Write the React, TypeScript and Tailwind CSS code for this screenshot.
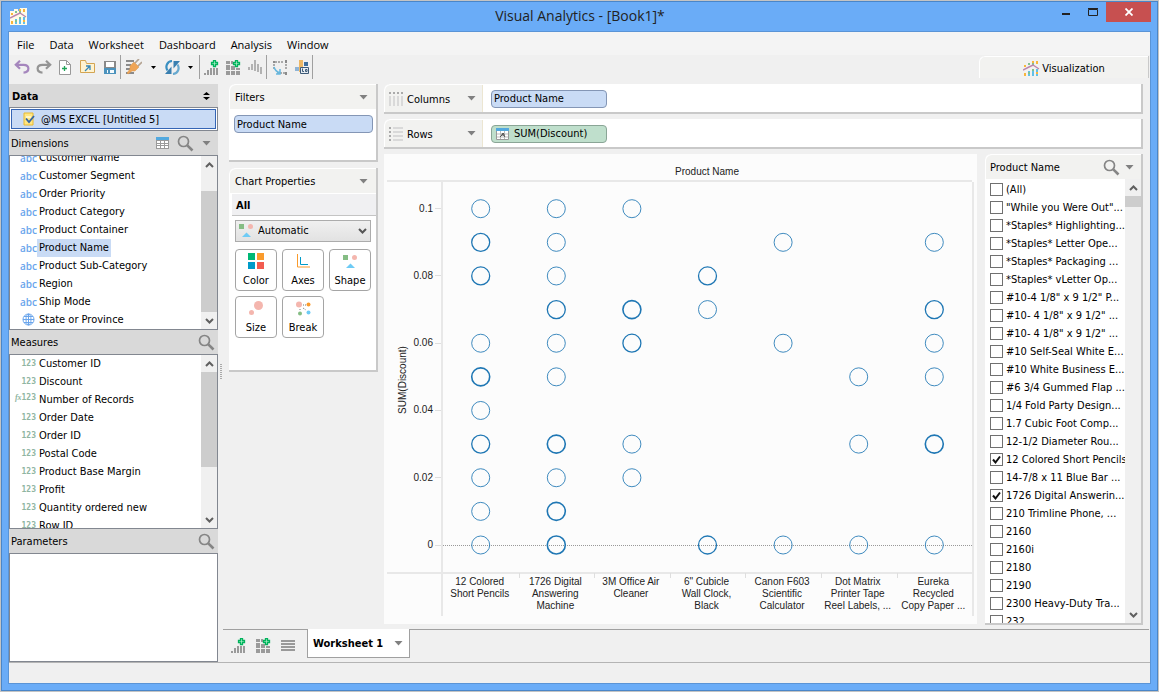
import React from "react";

const dimensions = [
  "Customer Name", "Customer Segment", "Order Priority", "Product Category", "Product Container",
  "Product Name", "Product Sub-Category", "Region", "Ship Mode", "State or Province",
];

const measures = [
  "Customer ID", "Discount", "Number of Records", "Order Date", "Order ID", "Postal Code",
  "Product Base Margin", "Profit", "Quantity ordered new", "Row ID",
];

const productNames = [
  "(All)", "\"While you Were Out\"...", "*Staples* Highlighting...", "*Staples* Letter Ope...", "*Staples* Packaging ...",
  "*Staples* vLetter Op...", "#10-4 1/8\" x 9 1/2\" P...", "#10- 4 1/8\" x 9 1/2\" ...", "#10- 4 1/8\" x 9 1/2\" ...",
  "#10 Self-Seal White E...", "#10 White Business E...", "#6 3/4 Gummed Flap ...", "1/4 Fold Party Design...", "1.7 Cubic Foot Comp...",
  "12-1/2 Diameter Rou...", "12 Colored Short Pencils", "14-7/8 x 11 Blue Bar ...", "1726 Digital Answerin...", "210 Trimline Phone, ...",
  "2160", "2160i", "2180", "2190", "2300 Heavy-Duty Tra...", "232",
];
const checkedIndexes = [15, 17];

// Each entry is [discount in hundredths, stroke weight].
const columns: { label: string[]; points: [number, number][] }[] = [
  { label: ["12 Colored", "Short Pencils"], points: [[10, 1], [9, 2], [8, 2], [6, 1], [5, 3], [4, 1], [3, 2], [2, 1], [1, 1], [0, 1]] },
  { label: ["1726 Digital", "Answering", "Machine"], points: [[10, 1], [9, 1], [8, 1], [7, 2], [6, 1], [5, 1], [3, 3], [2, 1], [1, 3], [0, 3]] },
  { label: ["3M Office Air", "Cleaner"], points: [[10, 1], [7, 3], [6, 2], [3, 1], [2, 1]] },
  { label: ["6\" Cubicle", "Wall Clock,", "Black"], points: [[8, 2], [7, 1], [0, 2]] },
  { label: ["Canon F603", "Scientific", "Calculator"], points: [[9, 1], [6, 1], [0, 1]] },
  { label: ["Dot Matrix", "Printer Tape", "Reel Labels, ..."], points: [[5, 1], [3, 1], [0, 1]] },
  { label: ["Eureka", "Recycled", "Copy Paper ..."], points: [[9, 1], [7, 2], [6, 1], [5, 1], [3, 3], [0, 1]] },
];

const Caret = ({ className = "" }: { className?: string }) => (
  <svg className={className} width="9" height="5" viewBox="0 0 9 5"><path d="M0.5 0h8L4.500 4.500z" fill="#808080" /></svg>
);

const SearchIcon = () => (
  <svg width="17" height="17" viewBox="0 0 17 17" fill="none" stroke="#858585">
    <circle cx="6.500" cy="6.500" r="5" strokeWidth="1.700" />
    <path d="M10.300 10.300L15.500 15.500" strokeWidth="2.600" />
  </svg>
);

const AppLogo = ({ bg = false }: { bg?: boolean }) => (
  <svg width="17" height="17" viewBox="0 0 17 17">
    {bg && <path d="M0 3h4V1h4v2h2V0h7v17H0z" fill="#fffbea" />}
    <path d="M5 11h2v5H5zM9 9h2v7H9zM13 9h2v7h-2z" fill="#62c0e8" />
    <path d="M5 12h2v2H5zM9 9h2v2H9zM5 3h2v2H5zM9 3h2v2H9z" fill="#82c18d" />
    <path d="M1 5h2v2H1zM1 13h2v3H1zM9 1h2v2H9zM13 1h2v3h-2zM13 12h2v2h-2z" fill="#f8b63c" />
    <path d="M0 10L6 7L10 5L16 9" fill="none" stroke="#bd86ad" strokeWidth="1.400" />
  </svg>
);

const AddSheet = ({ grid = false }: { grid?: boolean }) => (
  <svg width="15" height="15" viewBox="0 0 15 15">
    {grid
      ? <path d="M0 1h4v3H0zM5 1h2v3H5zM0 5h4v5H0zM5 6h4v4H5zM10 8h4v2h-4zM0 11h4v4H0zM5 11h4v4H5zM10 11h4v4h-4z" fill="#9a9a9a" />
      : <path d="M0 13h2v2H0zM3 10h2v5H3zM6 8h2v7H6zM9 8h2v7H9zM12 8h2v7h-2z" fill="#9a9a9a" />}
    <path d="M9.500 0.500h2v2h2v2h-2v2h-2v-2h-2v-2h2z" fill="#b7f2d0" stroke="#00b35c" strokeWidth="1.300" />
  </svg>
);

const ShapesIcon = () => (
  <svg width="15" height="13" viewBox="0 0 15 13">
    <path d="M0 0h5v5H0z" fill="#85bd84" /><circle cx="11.500" cy="2.500" r="2.500" fill="#f4b6ae" /><path d="M7.500 8.500L12 13H3z" fill="#6ecbf5" />
  </svg>
);

const toolIcons: Record<string, React.ReactNode> = {
  Undo: <svg width="16" height="14" viewBox="0 0 16 14" fill="none" stroke="#a586bd" strokeWidth="2.200"><path d="M6 .8L1.800 4.800L6 8.800M2 4.800h7.500c6.500 0 6.500 7.500 0 7.800" /></svg>,
  Redo: <svg width="16" height="14" viewBox="0 0 16 14" fill="none" stroke="#949494" strokeWidth="2.200"><path d="M10 .8L14.200 4.800L10 8.800M14 4.800H6.500c-6.500 0-6.500 7.500 0 7.800" /></svg>,
  New: <svg width="12" height="15" viewBox="0 0 12 15"><path d="M.5.5h7l4 4v10H.5z" fill="#fff" stroke="#999" /><path d="M7.500.5v4h4" fill="none" stroke="#999" /><path d="M3 8.500h5M5.500 6v5" stroke="#22a559" strokeWidth="1.300" /></svg>,
  Open: <svg width="15" height="14" viewBox="0 0 15 14"><path d="M.5.5h5l1 3h8v9H.5z" fill="#fff3d0" stroke="#d3a552" /><path d="M5 11L9.500 6.500M6 6h4v4" fill="none" stroke="#3687b8" strokeWidth="1.300" /></svg>,
  Save: <svg width="12" height="13" viewBox="0 0 12 13"><path d="M0 0h12v7H0z" fill="#8a8a8a" /><path d="M2 1h8v5H2z" fill="#fff" /><path d="M0 7h12v6H0z" fill="#4c93bd" /><path d="M3 9h7v3H3z" fill="#f4fafd" /><path d="M4 9h2v3H4z" fill="#4c93bd" /></svg>,
  Connect: <svg width="17" height="16" viewBox="0 0 17 16"><path d="M1 1h8v2H1zM1 5h5v2H1zM1 9h4v2H1zM1 13h8v2H1z" fill="#8b8b8b" /><path d="M5 7l4-4 5 5-4 4H7l-4 3-1-1 3-4z" fill="#efa557" stroke="#d6954d" strokeWidth=".5" /><path d="M10 4l4-4M13 7l4-4" stroke="#b4a392" strokeWidth="1.700" /></svg>,
  Refresh: <svg width="15" height="15" viewBox="0 0 15 15"><path d="M7 1C2 1.500 0 6.500 2.500 10.500" fill="none" stroke="#3a8fc1" strokeWidth="2.200" /><path d="M8 14c5-.5 7-5.500 4.500-9.500" fill="none" stroke="#68a9cf" strokeWidth="2.200" /><path d="M6.500 6.500v7.500H0zM8.500 8.500V1H15z" fill="#397fb0" /></svg>,
  Sort: <svg width="15" height="14" viewBox="0 0 15 14"><path d="M0 7h2v3H0zM3 4h2v6H3zM6 0h2v11H6zM9 4h2v8H9zM12 7h2v7h-2z" fill="#b2b2b2" /></svg>,
  Swap: <svg width="15" height="15" viewBox="0 0 15 15"><path d="M3 2h9M2 4v6M14 4v6M5 13h8" fill="none" stroke="#939393" strokeDasharray="2 1" strokeWidth="1.500" /><path d="M1 1h2v2H1zM13 0h2v3h-2zM13 12h2v3h-2z" fill="#8b8b8b" /><path d="M2 7c1 4 3 5 6 6M8 9v5H4" fill="none" stroke="#67b8df" strokeWidth="1.500" /></svg>,
  Labels: <svg width="14" height="15" viewBox="0 0 14 15"><path d="M4 0h4v12H4z" fill="#edb765" /><path d="M0 7h4v4H0z" fill="#8fb4d6" /><path d="M9 2h4v4H9z" fill="#3d6d9b" /><path d="M5.500 7.500h8v6h-8z" fill="#e7edf2" stroke="#3d5a78" /><path d="M7.500 8.500v3h1.500M10.500 9.500h1.500v2h-1.500z" fill="none" stroke="#3d5a78" /></svg>,
};

const ToolButton = ({ name, width }: { name: string; width: string }) => (
  <button aria-label={name} className={`flex h-6 shrink-0 items-center justify-center ${width}`}>{toolIcons[name]}</button>
);

const Separator = () => <div className="h-6 w-px shrink-0 bg-[#a0a0a0]" />;

const DropArrow = ({ name }: { name: string }) => (
  <button aria-label={`${name} options`} className="flex h-6 w-[17px] shrink-0 items-center justify-center">
    <svg width="5" height="3" viewBox="0 0 5 3"><path d="M0 0h5L2.500 3z" fill="#000" /></svg>
  </button>
);

const Scrollbar = ({ thumb }: { thumb: string }) => (
  <div className="flex w-4 shrink-0 flex-col items-center bg-[#f0f0f0]">
    <button aria-label="Scroll up" className="flex h-[17px] w-full shrink-0 items-center justify-center">
      <svg width="9" height="6" viewBox="0 0 9 6" fill="none" stroke="#606060" strokeWidth="2"><path d="M1 5L4.500 1.500L8 5" /></svg>
    </button>
    <div className="flex min-h-0 w-full flex-1 flex-col"><div className={`w-full bg-[#cdcdcd] ${thumb}`} /></div>
    <button aria-label="Scroll down" className="flex h-[17px] w-full shrink-0 items-center justify-center">
      <svg width="9" height="6" viewBox="0 0 9 6" fill="none" stroke="#606060" strokeWidth="2"><path d="M1 1L4.500 4.500L8 1" /></svg>
    </button>
  </div>
);

const SideHeader = ({ title, children }: { title: string; children?: React.ReactNode }) => (
  <div className="flex h-6 shrink-0 items-center gap-2 bg-[#d9d9d9] pr-[3px] pl-[2px]">
    <h2 className="flex-1 pt-[2px]">{title}</h2>
    {children}
    <button aria-label={`Search ${title}`}><SearchIcon /></button>
  </div>
);

const Globe = () => (
  <svg width="13" height="13" viewBox="0 0 13 13" fill="none" stroke="#6aa5ec"><circle cx="6.500" cy="6.500" r="5.500" /><ellipse cx="6.500" cy="6.500" rx="2.500" ry="5.500" /><path d="M1 6.500h11M2 3.500h9M2 9.500h9M6.500 1v11" /></svg>
);

const PropButton = ({ label, children }: { label: string; children: React.ReactNode }) => (
  <button className="flex h-[42px] flex-col items-center justify-between rounded border border-[#a5a5a5] bg-white pt-[3px] pb-[2px]">
    <span className="flex h-4 items-center">{children}</span>
    <span>{label}</span>
  </button>
);

const panel = "rounded-tl-md border-t border-l border-white shadow-[1px_1px_0_1px_#c9c9c9] bg-white";

function PanelHeader({ title }: { title: string }) {
  return (
    <div className="flex h-6 shrink-0 items-center justify-between rounded-tl-md bg-[#f2f2f0] pr-2 pl-[5px]">
      <h2 className="pt-[2px]">{title}</h2>
      <button aria-label={`${title} menu`}><Caret /></button>
    </div>
  );
}

function Shelf({ title, icon, children }: { title: string; icon: React.ReactNode; children: React.ReactNode }) {
  return (
    <div className={`flex h-7 shrink-0 ${panel}`}>
      <div className="flex w-[98px] items-center gap-1 rounded-tl-md border-r border-[#ece6d2] bg-[#f2f2f0] pr-[6px] pl-1">
        {icon}
        <h2 className="flex-1 pt-[2px]">{title}</h2>
        <button aria-label={`${title} menu`}><Caret /></button>
      </div>
      <div className="flex items-center pl-2">{children}</div>
    </div>
  );
}

function Chart() {
  const x = (i: number) => 97.7 + i * 75.6;
  const y = (v: number) => 391 - v * 33.63;
  return (
    <svg className="h-full w-full" viewBox="1 0 593 470" fontFamily="Liberation Sans, Arial, sans-serif" fontSize="10" fill="#222">
      <path d="M4 27H589M59 28v434M590 28v434M4 419H589" stroke="#e8e8e8" strokeWidth="2" fill="none" />
      <text x="324" y="21" textAnchor="middle">Product Name</text>
      <text transform="translate(23 226) rotate(-90)" textAnchor="middle">SUM(Discount)</text>
      {[0, 2, 4, 6, 8, 10].map((v) => (
        <g key={v}>
          <path d={`M52 ${Math.floor(y(v))}.5h6`} stroke="#dedede" />
          <text x="50" y={Math.round(y(v) + 3)} textAnchor="end">{v === 0 ? "0" : String(v / 100)}</text>
        </g>
      ))}
      <path d="M60 391.500H589" stroke="#999" strokeDasharray="1 1" />
      {columns.map((c, i) => (
        <g key={i}>
          {i > 0 && <path d={`M${Math.round(60 + i * 75.6)}.5 419v5`} stroke="#dedede" />}
          {c.points.map(([v, w]) => (
            <circle key={v} cx={x(i)} cy={y(v)} r="9" fill="none" stroke="#1f77b4" strokeOpacity={w === 1 ? 0.85 : 1} strokeWidth={w === 1 ? 1 : w === 2 ? 1.3 : 1.6} />
          ))}
          {c.label.map((line, k) => <text key={k} x={x(i) - 1} y={431 + k * 12} textAnchor="middle">{line}</text>)}
        </g>
      ))}
    </svg>
  );
}

export default function App() {
  return (
    <div className="flex h-screen flex-col border border-[#c4c4c4] bg-[#6aacf7] text-[11px] leading-[14px] text-black font-['DejaVu_Sans_Condensed',Tahoma,sans-serif]">
      <div className="flex min-h-0 flex-1 flex-col border border-[#4a86c8] px-[6px] pb-[6px]">
        <header className="flex h-[29px] shrink-0 items-start">
          <div className="flex w-[100px] pt-[6px] pl-[2px]"><AppLogo bg /></div>
          <h1 className="flex-1 pt-1 text-center font-['Open_Sans','Noto_Sans',sans-serif] text-[14px] leading-5 text-[#222]">Visual Analytics - [Book1]*</h1>
          <div className="flex">
            <button aria-label="Minimize" className="flex h-5 w-[27px] items-center justify-center pt-1"><svg width="8" height="2"><path d="M0 0h8v2H0z" fill="#222" /></svg></button>
            <button aria-label="Maximize" className="flex h-5 w-[27px] items-center justify-center"><svg width="10" height="8"><path d="M.5 1.500h9v6h-9zM0 .5h10" fill="none" stroke="#222" /></svg></button>
            <button aria-label="Close" className="flex h-5 w-[45px] items-center justify-center bg-[#c75050]"><svg width="8" height="8" viewBox="0 0 8 8"><path d="M.5.5l7 7M7.500.5l-7 7" stroke="#fff" strokeWidth="1.800" /></svg></button>
          </div>
        </header>

        <div className="flex min-h-0 flex-1 flex-col border border-[#5a94d6] bg-[#f0f0f0]">
          <nav className="flex h-[23px] shrink-0 items-center gap-[15px] bg-[#f4f4f4] pt-[2px] pl-2 font-['Open_Sans','Noto_Sans',sans-serif] text-[11px]">
            {["File", "Data", "Worksheet", "Dashboard", "Analysis", "Window"].map((m) => <button key={m}>{m}</button>)}
          </nav>

          <div className="flex h-7 shrink-0">
            <div className="flex flex-1 items-start pl-[2px]">
              <ToolButton name="Undo" width="w-[22px]" /><ToolButton name="Redo" width="w-[21px]" /><ToolButton name="New" width="w-[21px]" /><ToolButton name="Open" width="w-6" /><ToolButton name="Save" width="w-[21px]" />
              <Separator />
              <ToolButton name="Connect" width="w-6" /><DropArrow name="Connect" /><ToolButton name="Refresh" width="w-5" /><DropArrow name="Refresh" />
              <Separator />
              <button aria-label="Add worksheet" className="flex h-6 w-[22px] items-center justify-center"><AddSheet /></button>
              <button aria-label="Add dashboard" className="flex h-6 w-[22px] items-center justify-center"><AddSheet grid /></button>
              <ToolButton name="Sort" width="w-[22px]" />
              <Separator />
              <ToolButton name="Swap" width="w-6" /><ToolButton name="Labels" width="w-[21px]" />
              <Separator />
            </div>
            <button className="mt-px mr-[2px] flex h-[22px] w-[169px] items-center justify-center gap-[2px] rounded-tl-md border-t border-l border-white bg-[#f2f2f0] pt-[2px] shadow-[1px_0_0_0_#c9c9c9]"><AppLogo />Visualization</button>
          </div>

          <div className="flex min-h-0 flex-1">
            <aside className="flex w-[209px] shrink-0 flex-col pt-px">
              <div className="flex h-[23px] shrink-0 items-center justify-between bg-[#d9d9d9] pr-2 pl-[3px]">
                <h2 className="pt-[2px] font-bold">Data</h2>
                <button aria-label="Sort data"><svg width="7" height="8"><path d="M0 3h7L3.500 0zM0 5h7L3.500 8z" /></svg></button>
              </div>
              <button className="flex h-6 shrink-0 border border-[#828790] bg-white p-px">
                <span className="flex h-full w-full items-center gap-[5px] border border-[#3465b5] bg-[#c9dbf5] pl-[11px]">
                  <svg width="13" height="14" viewBox="0 0 13 14"><path d="M1 1h9v12H1z" fill="#ffe682" stroke="#e8b931" /><path d="M3 4h5v2H3z" fill="#fff6c5" /><path d="M3 6.500l3 3.500l5-6" fill="none" stroke="#3465a5" strokeWidth="1.800" /></svg>
                  <span className="pt-[2px]">@MS EXCEL [Untitled 5]</span>
                </span>
              </button>
              <div className="flex h-6 shrink-0 items-center gap-2 bg-[#d9d9d9] pr-[7px] pl-[2px]">
                <h2 className="flex-1 pt-[2px]">Dimensions</h2>
                <button aria-label="View data"><svg width="13" height="12"><path d="M0 0h13v12H0z" fill="#999" /><path d="M0 0h13v3H0z" fill="#53a9df" /><path d="M1 4h3v2H1zM5 4h3v2H5zM9 4h3v2H9zM1 7h3v1H1zM5 7h3v1H5zM9 7h3v1H9zM1 9h3v2H1zM5 9h3v2H5zM9 9h3v2H9z" fill="#fff" /></svg></button>
                <button aria-label="Search Dimensions"><SearchIcon /></button>
                <button aria-label="Dimensions menu"><Caret /></button>
              </div>
              <div className="flex h-[175px] shrink-0 overflow-hidden border border-[#828790] bg-white">
                <ul className="-mt-[7px] flex-1 pl-[10px]">
                  {dimensions.map((d) => (
                    <li key={d} className="flex h-[18px] items-center">
                      <span className="flex w-[17px] justify-center pb-px font-['Open_Sans',sans-serif] text-[10px] font-semibold text-[#6aa5ec]">{d === "State or Province" ? <Globe /> : "abc"}</span>
                      <button className={d === "Product Name" ? "bg-[#c9dbf5] px-[2px] py-[2px] leading-[14px]" : "px-[2px]"}>{d}</button>
                    </li>
                  ))}
                </ul>
                <Scrollbar thumb="mt-[18px] flex-1" />
              </div>
              <SideHeader title="Measures" />
              <div className="flex h-[175px] shrink-0 overflow-hidden border border-[#828790] bg-white">
                <ul className="flex-1 pl-[5px]">
                  {measures.map((m) => (
                    <li key={m} className="flex h-[18px] items-center">
                      <span className="flex w-[22px] justify-end pr-px font-['DejaVu_Sans_Mono',monospace] text-[8px] font-bold text-[#8fb5a2]">{m === "Number of Records" && <i className="pb-1 font-['Liberation_Serif',serif]">fx</i>}123</span>
                      <button className="px-[2px]">{m}</button>
                    </li>
                  ))}
                </ul>
                <Scrollbar thumb="h-[95px]" />
              </div>
              <SideHeader title="Parameters" />
              <div className="min-h-0 flex-1 border border-[#828790] bg-white" />
            </aside>

            <div className="flex w-[11px] shrink-0 items-center pl-[2px]">
              <div className="mb-[2px] h-4 w-[2px] bg-[repeating-linear-gradient(#aaa_0_1px,transparent_1px_2px)]" />
            </div>

            <div className="flex min-w-0 flex-1 flex-col">
              <main className="flex min-h-0 flex-1 gap-2 pr-[9px] pb-[5px]">
                <div className="flex w-[147px] shrink-0 flex-col gap-2 pt-px">
                  <section className={`h-[76px] ${panel}`}>
                    <PanelHeader title="Filters" />
                    <div className="p-1 pt-[6px] pr-[3px]">
                      <button className="h-[18px] w-full rounded border border-[#8496b5] bg-[#c9dbf5] pt-px pl-[2px] text-left">Product Name</button>
                    </div>
                  </section>
                  <section className={`h-[202px] ${panel}`}>
                    <PanelHeader title="Chart Properties" />
                    <h3 className="ml-[2px] h-[23px] border-t border-b border-t-white border-b-[#c4c4c4] bg-[#f0f0f2] pt-[5px] pl-1 font-bold">All</h3>
                    <div className="p-[5px] pt-1">
                      <div className="relative">
                        <select aria-label="Chart type" className="block h-[22px] w-full appearance-none border border-[#acacac] bg-linear-to-b from-[#f0f0f0] to-[#e2e2e2] pl-[22px]"><option>Automatic</option></select>
                        <span className="pointer-events-none absolute top-1 left-1"><ShapesIcon /></span>
                        <svg className="pointer-events-none absolute top-2 right-1" width="9" height="6" fill="none" stroke="#555" strokeWidth="2"><path d="M1 1l3.500 3.500L8 1" /></svg>
                      </div>
                      <div className="mt-[7px] grid grid-cols-3 gap-[5px]">
                        <PropButton label="Color"><svg width="16" height="16"><path d="M0 0h7v7H0z" fill="#00b875" /><path d="M9 0h7v7H9z" fill="#fa9b2c" /><path d="M0 9h7v7H0z" fill="#009bc9" /><path d="M9 9h7v7H9z" fill="#f25c50" /></svg></PropButton>
                        <PropButton label="Axes"><svg width="13" height="14" fill="none"><path d="M.5 0v13h12.500" stroke="#fa9b2c" /><path d="M3.500 3v7.500H11" stroke="#009bc9" /></svg></PropButton>
                        <PropButton label="Shape"><ShapesIcon /></PropButton>
                        <PropButton label="Size"><svg width="14" height="14" fill="#f4b6ae"><circle cx="9.500" cy="4.500" r="4.500" /><circle cx="2.500" cy="11.500" r="2.500" /></svg></PropButton>
                        <PropButton label="Break"><svg width="15" height="15"><circle cx="3" cy="3.500" r="3" fill="#f4b6ae" /><circle cx="12.500" cy="3.500" r="2" fill="#fa9b2c" /><circle cx="4" cy="12.500" r="2" fill="#85bd84" /><circle cx="12.500" cy="11.500" r="2" fill="#6ecbf5" /><path d="M7 4h3M4 8v2M7 7l3 2" stroke="#777" strokeDasharray="1 1" /></svg></PropButton>
                      </div>
                    </div>
                  </section>
                </div>

                <div className="flex min-w-0 flex-1 flex-col gap-[7px] pt-px">
                  <Shelf title="Columns" icon={<svg width="14" height="14"><path d="M0 0h2v2H0zM4 0h2v2H4zM8 0h2v2H8zM12 0h2v2h-2z" fill="#aaa" /><path d="M0 4h2v10H0zM4 4h2v10H4zM8 4h2v10H8zM12 4h2v10h-2z" fill="#d9d9d9" /></svg>}>
                    <button className="h-[18px] w-[116px] rounded border border-[#8496b5] bg-[#c9dbf5] pt-px pl-[2px] text-left">Product Name</button>
                  </Shelf>
                  <Shelf title="Rows" icon={<svg width="14" height="14"><path d="M0 0h2v2H0zM0 4h2v2H0zM0 8h2v2H0zM0 12h2v2H0z" fill="#aaa" /><path d="M4 0h10v2H4zM4 4h10v2H4zM4 8h10v2H4zM4 12h10v2H4z" fill="#d9d9d9" /></svg>}>
                    <button className="flex h-[18px] w-[116px] items-center gap-[5px] rounded border border-[#8aa596] bg-[#bfdfcc] pt-px pl-1">
                      <svg width="13" height="12"><path d="M.5.5h12v11H.5z" fill="#fff" stroke="#999" /><path d="M0 0h13v3H0z" fill="#53a9df" /><path d="M1 6h11M1 9h11M4.500 3v8M8.500 3v8" stroke="#bbb" /><path d="M4 9l4-4M6 5l3 4M5 7h4" stroke="#555" /></svg>
                      SUM(Discount)
                    </button>
                  </Shelf>
                  <div className="flex min-h-0 flex-1 gap-2">
                    <section aria-label="Chart" className="min-w-0 flex-1 bg-[#fcfcfc]"><Chart /></section>
                    <section className={`mb-px flex w-[156px] shrink-0 flex-col ${panel}`}>
                      <div className="flex h-6 shrink-0 items-center gap-[5px] rounded-tl-md bg-[#f2f2f0] pr-[7px] pl-1">
                        <h2 className="flex-1 pt-[2px]">Product Name</h2>
                        <button aria-label="Search Product Name"><SearchIcon /></button>
                        <button aria-label="Product Name menu"><Caret /></button>
                      </div>
                      <div className="flex min-h-0 flex-1 overflow-hidden">
                        <ul className="min-w-0 flex-1 pt-px pl-1">
                          {productNames.map((p, i) => (
                            <li key={i} className="h-[18px]">
                              <label className="grid h-full grid-cols-[13px_1fr] items-center gap-[3px] whitespace-nowrap">
                                <input type="checkbox" defaultChecked={checkedIndexes.includes(i)} className="peer col-start-1 row-start-1 h-[13px] w-[13px] appearance-none border border-[#707070] bg-white" />
                                <svg className="pointer-events-none invisible col-start-1 row-start-1 peer-checked:visible" width="13" height="13"><path d="M3 6.500l2.500 3L10 3.500" fill="none" stroke="#111" strokeWidth="2" /></svg>
                                <span className="pt-px">{p}</span>
                              </label>
                            </li>
                          ))}
                        </ul>
                        <Scrollbar thumb="h-[11px]" />
                      </div>
                    </section>
                  </div>
                </div>
              </main>

              <footer className="-ml-[6px] flex h-[33px] shrink-0">
                <div className="flex w-[84px] items-center gap-[10px] border-t border-[#a0a0a0] pb-px pl-2">
                  <button aria-label="New worksheet"><AddSheet /></button>
                  <button aria-label="New dashboard"><AddSheet grid /></button>
                  <button aria-label="Sheet list"><svg width="14" height="12"><path d="M0 0h14v2H0zM0 3h14v2H0zM0 6h14v2H0zM0 9h14v2H0z" fill="#999" /></svg></button>
                </div>
                <button className="flex h-[29px] w-[103px] shrink-0 items-center justify-between border border-t-0 border-[#a0a0a0] bg-white pt-px pr-[6px] pl-[5px] font-bold">Worksheet 1<Caret /></button>
                <div className="mr-px flex-1 border-t border-[#a0a0a0]" />
              </footer>
            </div>
          </div>
          <div className="h-[21px] shrink-0 border-t border-[#b4b4b4]" />
        </div>
      </div>
    </div>
  );
}
